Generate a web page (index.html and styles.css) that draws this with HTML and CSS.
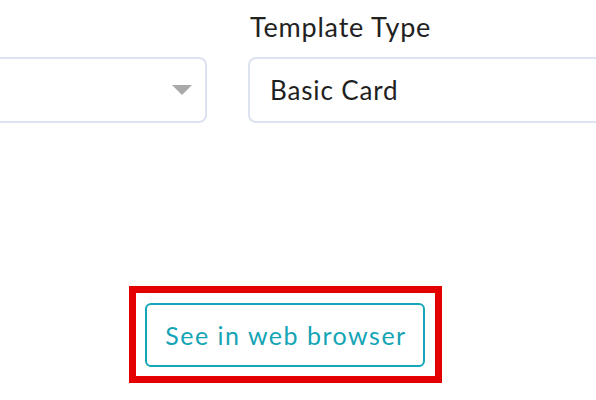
FILE: index.html
```html
<!DOCTYPE html>
<html lang="en">
<head>
<meta charset="utf-8">
<title>Template settings</title>
<link rel="stylesheet" href="styles.css">
</head>
<body>
  <div class="fields">
    <div class="field field-left">
      <div class="label">&nbsp;</div>
      <div class="select"><span class="caret"></span></div>
    </div>
    <div class="field field-right">
      <div class="label">Template Type</div>
      <div class="input">Basic Card</div>
    </div>
  </div>
  <div class="actions">
    <div class="highlight">
      <button class="btn" type="button">See in web browser</button>
    </div>
  </div>
</body>
</html>
```

FILE: styles.css
```css
html, body {
  margin: 0;
  padding: 0;
  background: #ffffff;
}

body {
  width: 596px;
  height: 400px;
  overflow: hidden;
  font-family: Lato, "Open Sans", "Liberation Sans", sans-serif;
  color: #222222;
}

.fields {
  display: flex;
  gap: 41px;
  padding-top: 11px;
  margin-left: -100px;
}

.field {
  flex-shrink: 0;
}

.field-left {
  width: 307px;
}

.field-right {
  width: 420px;
}

.label {
  font-size: 27px;
  letter-spacing: 0.8px;
  line-height: 32px;
  height: 32px;
  margin-bottom: 14px;
  padding-left: 2px;
  color: #222222;
}

.select,
.input {
  box-sizing: border-box;
  height: 66px;
  border: 2px solid #dde2f0;
  border-radius: 8px;
  background: #ffffff;
}

.select {
  display: flex;
  align-items: center;
  justify-content: flex-end;
  padding-right: 13px;
}

.caret {
  width: 0;
  height: 0;
  border-left: 10px solid transparent;
  border-right: 10px solid transparent;
  border-top: 10px solid #a9a9a9;
}

.input {
  padding-left: 20px;
  font-size: 26px;
  letter-spacing: 0.85px;
  line-height: 62px;
  color: #1f1f1f;
}

.actions {
  display: flex;
  margin-top: 163px;
  padding-left: 129px;
}

.highlight {
  border: 7px solid #e50000;
  padding: 10px 10px 9px 9px;
}

.btn {
  box-sizing: border-box;
  width: 280px;
  height: 64px;
  border: 2px solid #17a6b7;
  border-radius: 6px;
  background: #ffffff;
  color: #13a4b6;
  font-family: Lato, "Open Sans", "Liberation Sans", sans-serif;
  font-size: 25px;
  letter-spacing: 1.5px;
  padding: 0 0 0 2px;
  cursor: pointer;
}
```
